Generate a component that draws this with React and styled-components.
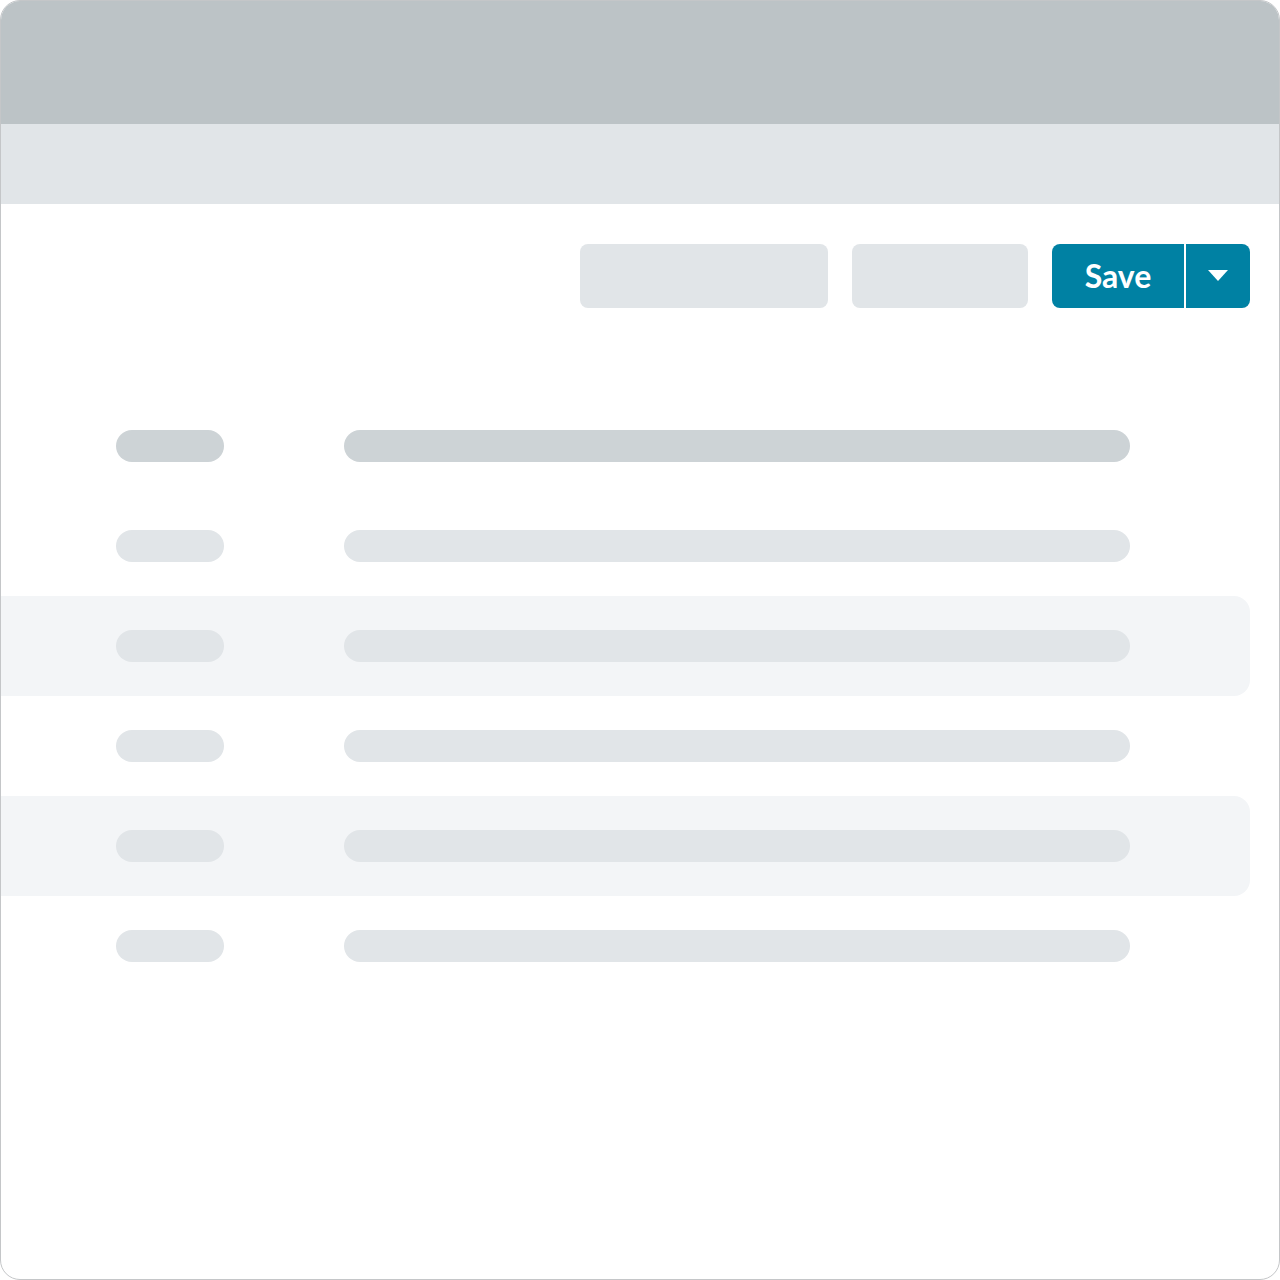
import React from 'react'
import styled, { createGlobalStyle } from 'styled-components'

const Global = createGlobalStyle`
  body {
    margin: 0;
    background: #ffffff;
    font-family: Lato, "Noto Sans", sans-serif;
  }
`

const rows = [
  { dark: true },
  {},
  { shaded: true },
  {},
  { shaded: true },
  {},
]

const App = () => {
  return (
    <>
      <Global />
      <Frame>
        <TopBar />
        <SubBar />
        <Toolbar>
          <Placeholder $w={248} />
          <Placeholder $w={176} />
          <SplitButton>
            <SaveButton>Save</SaveButton>
            <ArrowButton aria-label="More">
              <svg width="20" height="11" viewBox="0 0 20 11">
                <path d="M0 0 H20 L10 11 Z" fill="#ffffff" />
              </svg>
            </ArrowButton>
          </SplitButton>
        </Toolbar>
        <List>
          {rows.map((r, i) => (
            <Row key={i} $shaded={r.shaded}>
              <Bar $w={108} $dark={r.dark} />
              <Bar $w={786} $dark={r.dark} />
            </Row>
          ))}
        </List>
      </Frame>
    </>
  )
}

export default App

const Frame = styled.div`
  width: 1280px;
  height: 1280px;
  box-sizing: border-box;
  border: 1px solid #c4c6c8;
  border-radius: 20px;
  overflow: hidden;
  background: #ffffff;
  display: flex;
  flex-direction: column;
`

const TopBar = styled.div`
  height: 123px;
  background: #bcc3c6;
  flex-shrink: 0;
`

const SubBar = styled.div`
  height: 80px;
  background: #e1e5e8;
  flex-shrink: 0;
`

const Toolbar = styled.div`
  display: flex;
  justify-content: flex-end;
  gap: 24px;
  padding: 40px 29px 0 0;
`

const Placeholder = styled.div`
  width: ${p => p.$w}px;
  height: 64px;
  border-radius: 8px;
  background: #e1e5e8;
`

const SplitButton = styled.div`
  display: flex;
  height: 64px;
  width: 198px;
  border-radius: 8px;
  overflow: hidden;
  background: #0081a3;
`

const SaveButton = styled.button`
  width: 134px;
  flex-shrink: 0;
  border: none;
  border-right: 2px solid #ffffff;
  background: transparent;
  color: #ffffff;
  font-family: Lato, "Noto Sans", sans-serif;
  font-weight: 700;
  font-size: 32px;
  padding: 0 0 2px;
  cursor: pointer;
`

const ArrowButton = styled.button`
  flex: 1;
  border: none;
  background: transparent;
  display: flex;
  align-items: center;
  justify-content: center;
  padding: 0 0 1px;
  cursor: pointer;
`

const List = styled.div`
  display: flex;
  flex-direction: column;
  margin-top: 88px;
`

const Row = styled.div`
  height: 100px;
  width: 1249px;
  box-sizing: border-box;
  display: flex;
  align-items: center;
  gap: 120px;
  padding-left: 115px;
  border-radius: 0 16px 16px 0;
  background: ${p => (p.$shaded ? '#f3f5f7' : 'transparent')};
`

const Bar = styled.div`
  width: ${p => p.$w}px;
  height: 32px;
  border-radius: 16px;
  background: ${p => (p.$dark ? '#cdd3d6' : '#e1e5e8')};
`
